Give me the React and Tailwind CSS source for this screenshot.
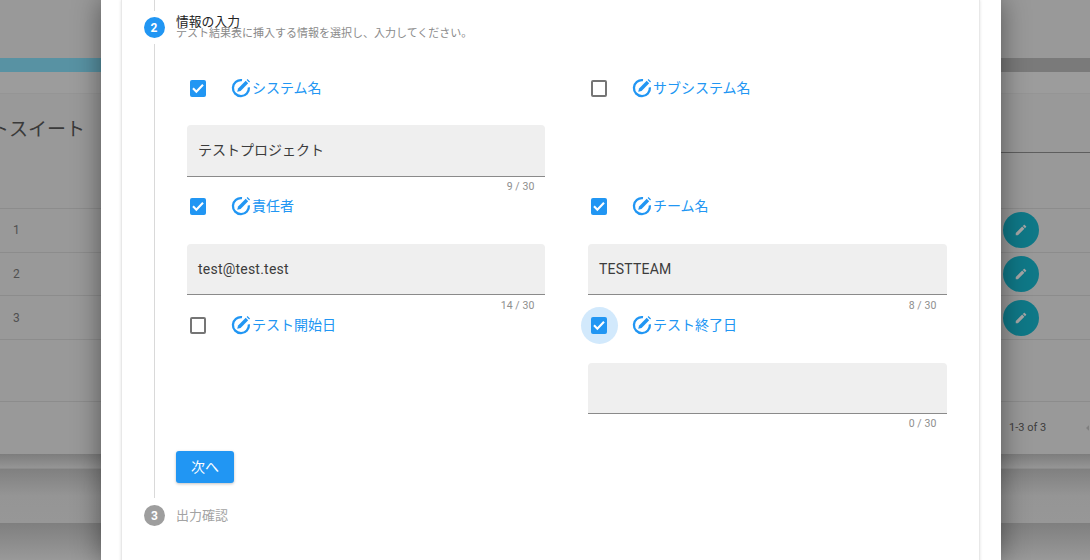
const font = { fontFamily: 'Roboto, "Noto Sans CJK JP", sans-serif' };

function EditIcon() {
  return (
    <svg viewBox="0 0 20 20" className="w-[20px] h-[20px] shrink-0 text-[#2196f3]" fill="none">
      <path d="M11 2.2A8 8 0 1 0 17.9 9.4" stroke="currentColor" strokeWidth="2.3" />
      <path d="M6.2 13.8l.9-3.4 7.6-7.6 2.5 2.5-7.6 7.6z" fill="currentColor" />
      <path d="M15.6 1.9l.9-.9 2.5 2.5-.9.9z" fill="currentColor" />
    </svg>
  );
}

function Check({ checked, focused }) {
  return (
    <div className="relative w-[16.5px] h-[17px] shrink-0">
      {focused && <div className="absolute -left-[9.5px] -top-[10px] w-[37px] h-[37px] rounded-full bg-[#d2e9fc]" />}
      {checked ? (
        <div className="relative w-full h-full rounded-[2px] bg-[#2196f3] flex items-center justify-center">
          <svg viewBox="0 0 24 24" className="w-[16px] h-[16px]" fill="none" stroke="#fff" strokeWidth="3.2">
            <path d="M4.5 12.5l5 5 10-10.5" />
          </svg>
        </div>
      ) : (
        <div className="w-full h-full rounded-[2px] border-2 border-[#757575]" />
      )}
    </div>
  );
}

function Field({ label, checked, focused, value, count, row, wide }) {
  const top = row === 1 ? 'mt-[19px]' : 'mt-[20px]';
  const box = row === 1 ? 'h-[52px]' : 'h-[51px]';
  const gap = row === 2 ? 'mt-[5px]' : 'mt-[4px]';
  return (
    <div className={row === 2 ? 'h-[119px]' : 'h-[118px]'}>
      <div className="h-[36px] flex items-center pl-[3px]">
        <Check checked={checked} focused={focused} />
        <div className="ml-[25px] flex items-center text-[#2196f3] text-[14px] leading-none">
          <EditIcon />
          <span className="ml-[1px]">{label}</span>
        </div>
      </div>
      {count && (
        <div className={top}>
          <div className={`${box} rounded-t-[4px] bg-[#efefef] border-b border-[#8a8a8a] pl-[11.5px] pr-[11px] flex items-center text-[14px] text-[#3c3c3c] ${wide ? 'tracking-[0.22px]' : ''}`}>
            {value}
          </div>
          <div className={`${gap} pr-[10px] text-right text-[10.5px] leading-[12px] tracking-[0.1px] text-[#8e8e8e]`}>{count}</div>
        </div>
      )}
    </div>
  );
}

function Bg({ children, className }) {
  return <div className={`border-b border-[#8c8c8c] ${className}`}>{children}</div>;
}

function SideColumn({ right }) {
  const rows = right ? ['', '', ''] : ['1', '2', '3'];
  return (
    <div className={`h-full flex flex-col bg-[#999] ${right ? 'flex-1 min-w-0' : 'w-[101px] shrink-0'}`}>
      <div className="h-[58px]" />
      <div className={`h-[14px] ${right ? 'bg-[#7a7a7a]' : 'bg-[#5892a3]'}`} />
      <div className="h-[22px] bg-[#9c9c9c] border-b border-[#959595]" />
      {right ? (
        <div className="h-[59px] border-b border-[#5e5e5e]" />
      ) : (
        <div className="h-[59px] pt-[22px] flex justify-end pr-[16px] overflow-hidden text-[19px] leading-[28px] text-[#3a3a3a] whitespace-nowrap">トスイート</div>
      )}
      <Bg className="h-[56px]" />
      {rows.map((n, i) => (
        <Bg key={i} className="h-[43.7px] flex items-center relative">
          {right ? (
            <div className="ml-[2px] w-[36px] h-[36px] rounded-full bg-[#0f7887] flex items-center justify-center">
              <svg viewBox="0 0 24 24" className="w-[14px] h-[14px]" fill="#a5a5a5">
                <path d="M20.71 7.04c.39-.39.39-1.04 0-1.41l-2.34-2.34c-.37-.39-1.02-.39-1.41 0l-1.84 1.83 3.75 3.75M3 17.25V21h3.75L17.81 9.93l-3.75-3.75L3 17.25z" />
              </svg>
            </div>
          ) : (
            <span className="ml-[13px] text-[12px] text-[#505050]">{n}</span>
          )}
        </Bg>
      ))}
      <Bg className="h-[62px]" />
      <div className="h-[52px] flex items-center text-[11px] text-[#3d3d3d]">
        {right && <span className="ml-[8px]">1-3 of 3</span>}
        {right && (
          <svg viewBox="0 0 6 8" className="ml-auto w-[4px] h-[6px]" fill="#7f7f7f">
            <path d="M4.5 0L0 4l4.5 4z" />
          </svg>
        )}
      </div>
      <div className="h-[15px] bg-gradient-to-b from-[#7d7d7d] to-[#959595] border-b border-[#8c8c8c]" />
      <div className="h-[54px] bg-gradient-to-b from-[#808080] via-[#959595] to-[#979797]" />
      <div className="flex-1 bg-gradient-to-b from-[#7f7f7f] to-[#999]" />
    </div>
  );
}

export default function App() {
  return (
    <div className="w-[1090px] h-[560px] overflow-hidden relative flex" style={font}>
      <SideColumn />
      <div className="w-[900px] shrink-0 bg-[#999]" />
      <SideColumn right />

      {/* Dialog */}
      <div className="absolute left-[101px] top-0 w-[900px] h-[560px] bg-white overflow-hidden shadow-[0_0_26px_rgba(0,0,0,0.45)]">
        <div className="ml-[20px] w-[859px] h-[580px] bg-white border-x border-[#e8e8e8] shadow-[0_0_3px_rgba(0,0,0,0.12)] relative">
          {/* Step 2 header */}
          <div className="h-[70px] flex pl-[22px]">
            <div className="w-[20px] flex flex-col items-center">
              <div className="w-px h-[11px] bg-[#d9d9d9]" />
              <div className="mt-[6px] w-[21px] h-[21px] shrink-0 rounded-full bg-[#2196f3] text-white text-[12px] font-bold flex items-center justify-center">2</div>
              <div className="mt-[6px] w-px flex-1 bg-[#d9d9d9]" />
            </div>
            <div className="ml-[12px] pt-[14px] relative">
              <div className="text-[12.8px] leading-[16px] text-[#222]">情報の入力</div>
              <div className="-mt-[3px] text-[11px] leading-[14px] text-[#8a8a8a] whitespace-nowrap">テスト結果表に挿入する情報を選択し、入力してください。</div>
            </div>
          </div>

          <div className="flex pl-[22px]">
            <div className="w-[20px] flex justify-center">
              <div className="w-px h-[428px] bg-[#d9d9d9]" />
            </div>
            <div className="ml-[12px]">
              <div className="pl-[10.5px] grid grid-cols-[358px_359px] gap-x-[43px]">
                <Field row={1} label="システム名" checked value="テストプロジェクト" count="9 / 30" />
                <Field row={1} label="サブシステム名" />
                <Field row={2} label="責任者" checked value="test@test.test" count="14 / 30" wide />
                <Field row={2} label="チーム名" checked value="TESTTEAM" count="8 / 30" wide />
                <Field row={3} label="テスト開始日" />
                <Field row={3} label="テスト終了日" checked focused value="" count="0 / 30" />
              </div>
              <button className="mt-[26px] w-[58px] h-[32px] rounded-[3px] bg-[#2196f3] text-white text-[14px] shadow-[0_1px_3px_rgba(0,0,0,0.25)]">次へ</button>
            </div>
          </div>

          {/* Step 3 */}
          <div className="mt-[7px] flex items-center pl-[22px]">
            <div className="w-[21px] h-[21px] rounded-full bg-[#9e9e9e] text-white text-[12px] font-bold flex items-center justify-center">3</div>
            <div className="ml-[11px] text-[13px] text-[#a3a3a3]">出力確認</div>
          </div>
        </div>
      </div>
    </div>
  );
}
